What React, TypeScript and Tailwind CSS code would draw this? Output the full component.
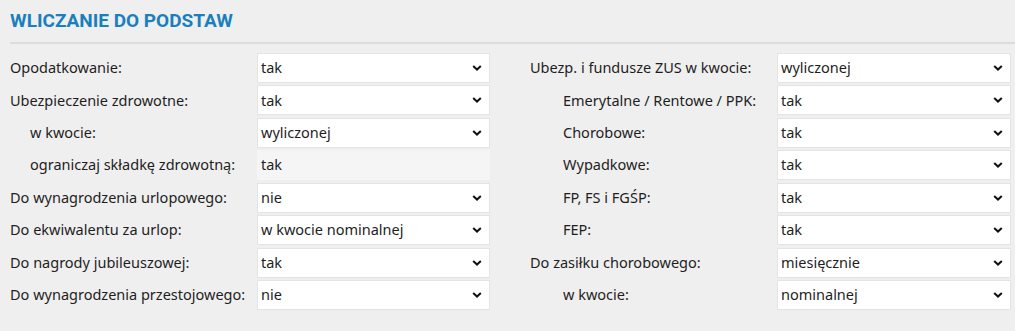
import { ReactNode } from 'react'

type Row = {
    label: string
    value: string
    indent?: boolean
    readOnly?: boolean
}

const leftRows: Row[] = [
    { label: 'Opodatkowanie:', value: 'tak' },
    { label: 'Ubezpieczenie zdrowotne:', value: 'tak' },
    { label: 'w kwocie:', value: 'wyliczonej', indent: true },
    { label: 'ograniczaj składkę zdrowotną:', value: 'tak', indent: true, readOnly: true },
    { label: 'Do wynagrodzenia urlopowego:', value: 'nie' },
    { label: 'Do ekwiwalentu za urlop:', value: 'w kwocie nominalnej' },
    { label: 'Do nagrody jubileuszowej:', value: 'tak' },
    { label: 'Do wynagrodzenia przestojowego:', value: 'nie' }
]

const rightRows: Row[] = [
    { label: 'Ubezp. i fundusze ZUS w kwocie:', value: 'wyliczonej' },
    { label: 'Emerytalne / Rentowe / PPK:', value: 'tak', indent: true },
    { label: 'Chorobowe:', value: 'tak', indent: true },
    { label: 'Wypadkowe:', value: 'tak', indent: true },
    { label: 'FP, FS i FGŚP:', value: 'tak', indent: true },
    { label: 'FEP:', value: 'tak', indent: true },
    { label: 'Do zasiłku chorobowego:', value: 'miesięcznie' },
    { label: 'w kwocie:', value: 'nominalnej', indent: true }
]

function Chevron() {
    return (
        <svg width="10" height="6" viewBox="0 0 10 6" className="shrink-0">
            <path d="M1.2 1 L5 4.6 L8.8 1" fill="none" stroke="#111" strokeWidth="2" />
        </svg>
    )
}

function Field({ row, indentClass }: { row: Row; indentClass: string }) {
    return (
        <>
            <div className={`flex items-center h-[30px] whitespace-nowrap ${row.indent ? indentClass : ''}`}>{row.label}</div>
            {row.readOnly ? (
                <div className="flex items-center h-[30px] px-[4px] bg-[#f5f5f5]">{row.value}</div>
            ) : (
                <div className="flex items-center justify-between h-[30px] pl-[3px] pr-[7px] bg-white border border-[#e4e4e4]">
                    <span>{row.value}</span>
                    <Chevron />
                </div>
            )}
        </>
    )
}

function Column({ rows, labelWidth, indentClass }: { rows: Row[]; labelWidth: string; indentClass: string }): ReactNode {
    return (
        <div className={`grid ${labelWidth} gap-y-[2.45px]`}>
            {rows.map((row, i) => (
                <Field key={i} row={row} indentClass={indentClass} />
            ))}
        </div>
    )
}

export default function App() {
    return (
        <div className="w-[1015px] h-[331px] bg-[#efefef] text-[#1e1e1e] text-[14.5px] overflow-hidden" style={{ fontFamily: '"Noto Sans", "Open Sans", sans-serif' }}>
            <div className="pl-[10px] pt-[7px]">
                <h2 className="text-[#1a7fbd] font-bold text-[19px] leading-[28px] font-['Roboto',sans-serif]">WLICZANIE DO PODSTAW</h2>
                <div className="mt-[7px] h-[2px] bg-[#dcdcdc]" />
            </div>
            <div className="flex pl-[10px] pt-[9px]">
                <div className="w-[480px]">
                    <Column rows={leftRows} labelWidth="grid-cols-[247px_233px]" indentClass="pl-[20px]" />
                </div>
                <div className="ml-[40px] w-[481px]">
                    <Column rows={rightRows} labelWidth="grid-cols-[247px_234px]" indentClass="pl-[33px]" />
                </div>
            </div>
        </div>
    )
}
